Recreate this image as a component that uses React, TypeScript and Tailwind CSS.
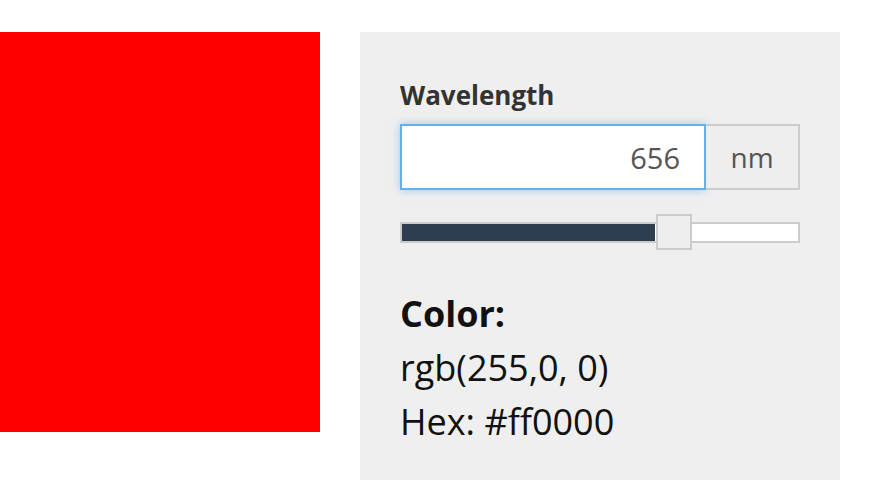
import React from 'react';

export default function App() {
    const value = 656;
    const pct = ((656 - 400) / 400) * 100;

    return (
        <div className="flex gap-10 pt-8 bg-white h-[480px] overflow-hidden" style={{ fontFamily: '"Open Sans", sans-serif' }}>
            <div className="w-[320px] h-[400px] bg-[#ff0000] shrink-0" />

            <div className="w-[480px] h-[460px] shrink-0 bg-[#efefef] px-10 pt-[44px]">
                <label className="block text-[26px] leading-[39px] font-bold text-[#333]">Wavelength</label>

                <div className="flex mt-[9px] h-[66px]">
                    <input
                        type="text"
                        readOnly
                        value={value}
                        className="w-[306px] h-full bg-white border-2 border-[#66afe9] shadow-[0_0_8px_rgba(102,175,233,0.6)] text-right pr-6 text-[29px] text-[#555] outline-none"
                        style={{ fontFamily: '"Open Sans", sans-serif' }}
                    />
                    <div className="flex-1 flex items-center justify-center bg-[#eeeeee] border-2 border-l-0 border-[#cccccc] text-[28px] text-[#555]">
                        nm
                    </div>
                </div>

                <div className="relative mt-6 h-9 flex items-center">
                    <div className="w-full h-[21px] bg-white border-2 border-[#cccccc] overflow-hidden">
                        <div className="h-full bg-[#2c3e50]" style={{ width: `${pct}%` }} />
                    </div>
                    <div
                        className="absolute top-0 w-9 h-9 bg-[#eeeeee] border-2 border-[#cccccc]"
                        style={{ left: `${pct}%` }}
                    />
                </div>

                <div className="mt-[37px] text-[36px] leading-[54px] text-[#111]">
                    <div className="font-bold">Color:</div>
                    <div>rgb(255,0, 0)</div>
                    <div>Hex: #ff0000</div>
                </div>
            </div>
        </div>
    );
}
